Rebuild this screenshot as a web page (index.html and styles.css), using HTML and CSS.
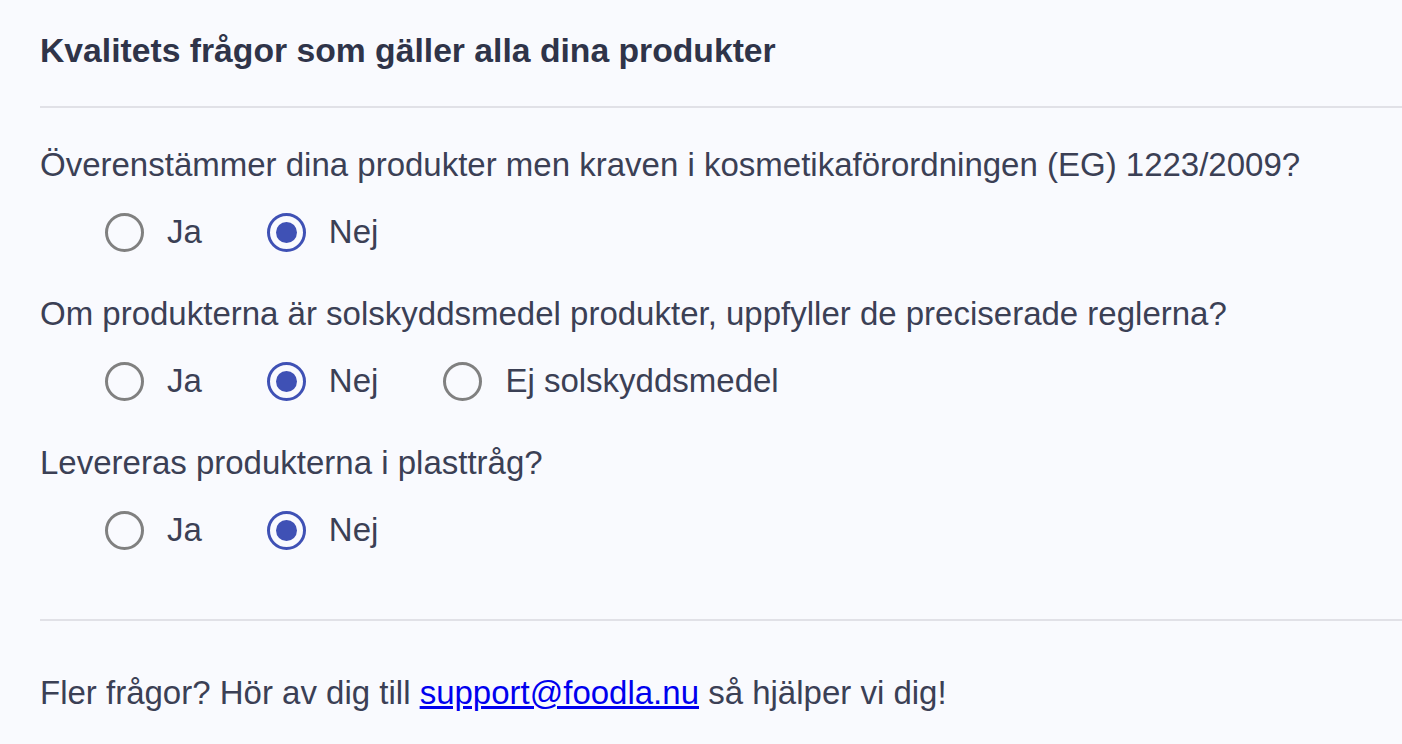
FILE: index.html
```html
<!DOCTYPE html>
<html lang="sv">
<head>
<meta charset="utf-8">
<link rel="stylesheet" href="styles.css">
</head>
<body>
<div class="page">
  <h2 class="title">Kvalitets frågor som gäller alla dina produkter</h2>
  <hr class="divider">
  <div class="question first">
    <p class="q-text">Överenstämmer dina produkter men kraven i kosmetikaförordningen (EG) 1223/2009?</p>
    <div class="options">
      <label class="opt"><span class="radio"></span><span class="lbl">Ja</span></label>
      <label class="opt"><span class="radio checked"></span><span class="lbl">Nej</span></label>
    </div>
  </div>
  <div class="question">
    <p class="q-text">Om produkterna är solskyddsmedel produkter, uppfyller de preciserade reglerna?</p>
    <div class="options">
      <label class="opt"><span class="radio"></span><span class="lbl">Ja</span></label>
      <label class="opt"><span class="radio checked"></span><span class="lbl">Nej</span></label>
      <label class="opt"><span class="radio"></span><span class="lbl">Ej solskyddsmedel</span></label>
    </div>
  </div>
  <div class="question">
    <p class="q-text">Levereras produkterna i plasttråg?</p>
    <div class="options">
      <label class="opt"><span class="radio"></span><span class="lbl">Ja</span></label>
      <label class="opt"><span class="radio checked"></span><span class="lbl">Nej</span></label>
    </div>
  </div>
  <hr class="divider bottom">
  <p class="footer">Fler frågor? Hör av dig till <a href="#">support@foodla.nu</a> så hjälper vi dig!</p>
</div>
</body>
</html>
```
FILE: styles.css
```css
html, body {
  margin: 0;
  padding: 0;
  background: #f9fafe;
}
body {
  font-family: "Liberation Sans", Arial, sans-serif;
  color: #3b4055;
}
.page {
  padding-left: 40px;
  padding-top: 30px;
}
.title {
  margin: 0;
  font-size: 33.7px;
  font-weight: bold;
  color: #2f3449;
  line-height: 40px;
}
.divider {
  border: none;
  height: 2px;
  background: #e1e1e7;
  margin: 36px 0 0 0;
}
.question {
  margin-top: 42px;
}
.question.first {
  margin-top: 37px;
}
.q-text {
  margin: 0;
  font-size: 33px;
  line-height: 40px;
}
.options {
  display: flex;
  align-items: center;
  padding-left: 65px;
  margin-top: 27px;
  gap: 65px;
  height: 40px;
}
.opt {
  display: flex;
  align-items: center;
  gap: 23px;
  font-size: 33px;
}
.radio {
  width: 33px;
  height: 33px;
  border: 3.5px solid #808080;
  border-radius: 50%;
  box-sizing: content-box;
  position: relative;
  flex: none;
}
.radio.checked {
  border-color: #3f51b5;
}
.radio.checked::after {
  content: "";
  position: absolute;
  left: 50%;
  top: 50%;
  width: 21px;
  height: 21px;
  margin: -10.5px 0 0 -10.5px;
  border-radius: 50%;
  background: #3f51b5;
}
.divider.bottom {
  margin-top: 69px;
}
.footer {
  margin: 52px 0 0 0;
  font-size: 33px;
  line-height: 40px;
}
.footer a {
  color: #0000ee;
}
```
